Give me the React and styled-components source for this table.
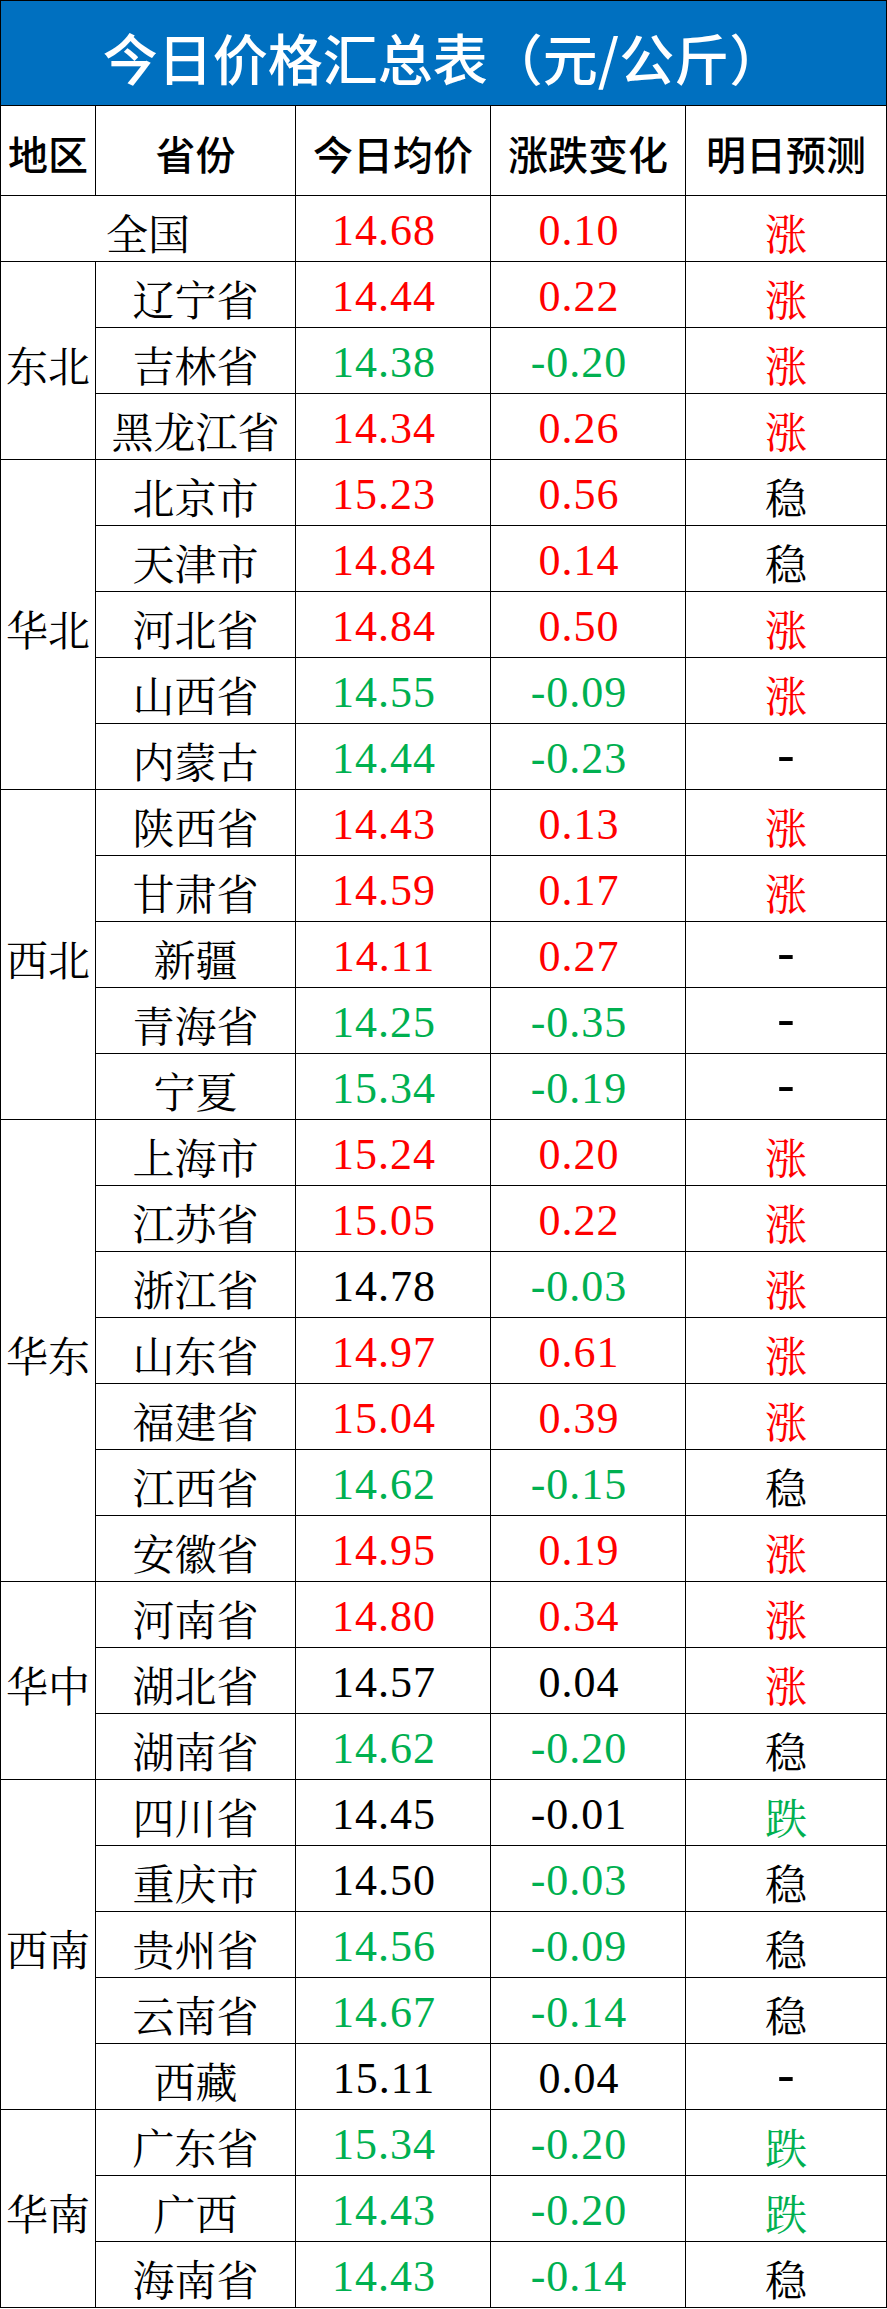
import React from "react"
import styled, { createGlobalStyle } from "styled-components"

const GlobalStyle = createGlobalStyle`
  html, body {
    margin: 0;
    padding: 0;
    background: #fff;
  }
  body {
    font-family: "Noto Serif CJK SC", "Noto Sans CJK SC", sans-serif;
  }
`

const RED = "#ff0000"
const GREEN = "#00b050"
const BLACK = "#000000"

const colorOf = (c) => (c === "r" ? RED : c === "g" ? GREEN : BLACK)

const Sheet = styled.div`
  width: 887px;
  box-sizing: border-box;
  border: 1px solid #000;
  border-bottom: none;
`

const TitleBar = styled.div`
  height: 105px;
  border-bottom: 1px solid #000;
  background: #0070c0;
  color: #fff;
  display: flex;
  align-items: center;
  justify-content: center;
  font-family: "Noto Sans CJK SC", sans-serif;
  font-size: 55px;
  font-weight: 500;
  padding: 6px 0 0 0;
  box-sizing: border-box;
`

const Grid = styled.div`
  display: grid;
  grid-template-columns: 95px 200px 195px 195px 200px;
  grid-template-rows: 90px;
  grid-auto-rows: 66px;
`

const Cell = styled.div`
  box-sizing: border-box;
  display: flex;
  align-items: center;
  justify-content: center;
  border-bottom: 1px solid #000;
  border-right: ${(p) => (p.$last ? "none" : "1px solid #000")};
  grid-column: ${(p) => (p.$cols ? `span ${p.$cols}` : "auto")};
  color: ${(p) => p.$color || BLACK};
  white-space: nowrap;
`

const HeadCell = styled(Cell)`
  font-family: "Noto Sans CJK SC", sans-serif;
  font-size: 40px;
  font-weight: 500;
  padding-top: 4px;
`

const TextCell = styled(Cell)`
  font-family: "Noto Serif CJK SC", "Noto Sans CJK SC", sans-serif;
  font-size: 42px;
  padding-top: 6px;
`

const NumCell = styled(Cell)`
  font-family: "Liberation Serif", "Times New Roman", serif;
  font-size: 44px;
  letter-spacing: 1px;
  padding-right: 18px;
  padding-top: 4px;
`

const DashCell = styled(Cell)`
  font-family: "Liberation Serif", "Times New Roman", serif;
  font-size: 52px;
  padding-bottom: 4px;
`

const regions = [
  {
    name: "东北",
    rows: [
      ["辽宁省", "14.44", "r", "0.22", "r", "涨", "r"],
      ["吉林省", "14.38", "g", "-0.20", "g", "涨", "r"],
      ["黑龙江省", "14.34", "r", "0.26", "r", "涨", "r"],
    ],
  },
  {
    name: "华北",
    rows: [
      ["北京市", "15.23", "r", "0.56", "r", "稳", "k"],
      ["天津市", "14.84", "r", "0.14", "r", "稳", "k"],
      ["河北省", "14.84", "r", "0.50", "r", "涨", "r"],
      ["山西省", "14.55", "g", "-0.09", "g", "涨", "r"],
      ["内蒙古", "14.44", "g", "-0.23", "g", "-", "k"],
    ],
  },
  {
    name: "西北",
    rows: [
      ["陕西省", "14.43", "r", "0.13", "r", "涨", "r"],
      ["甘肃省", "14.59", "r", "0.17", "r", "涨", "r"],
      ["新疆", "14.11", "r", "0.27", "r", "-", "k"],
      ["青海省", "14.25", "g", "-0.35", "g", "-", "k"],
      ["宁夏", "15.34", "g", "-0.19", "g", "-", "k"],
    ],
  },
  {
    name: "华东",
    rows: [
      ["上海市", "15.24", "r", "0.20", "r", "涨", "r"],
      ["江苏省", "15.05", "r", "0.22", "r", "涨", "r"],
      ["浙江省", "14.78", "k", "-0.03", "g", "涨", "r"],
      ["山东省", "14.97", "r", "0.61", "r", "涨", "r"],
      ["福建省", "15.04", "r", "0.39", "r", "涨", "r"],
      ["江西省", "14.62", "g", "-0.15", "g", "稳", "k"],
      ["安徽省", "14.95", "r", "0.19", "r", "涨", "r"],
    ],
  },
  {
    name: "华中",
    rows: [
      ["河南省", "14.80", "r", "0.34", "r", "涨", "r"],
      ["湖北省", "14.57", "k", "0.04", "k", "涨", "r"],
      ["湖南省", "14.62", "g", "-0.20", "g", "稳", "k"],
    ],
  },
  {
    name: "西南",
    rows: [
      ["四川省", "14.45", "k", "-0.01", "k", "跌", "g"],
      ["重庆市", "14.50", "k", "-0.03", "g", "稳", "k"],
      ["贵州省", "14.56", "g", "-0.09", "g", "稳", "k"],
      ["云南省", "14.67", "g", "-0.14", "g", "稳", "k"],
      ["西藏", "15.11", "k", "0.04", "k", "-", "k"],
    ],
  },
  {
    name: "华南",
    rows: [
      ["广东省", "15.34", "g", "-0.20", "g", "跌", "g"],
      ["广西", "14.43", "g", "-0.20", "g", "跌", "g"],
      ["海南省", "14.43", "g", "-0.14", "g", "稳", "k"],
    ],
  },
]

function DataCells({ row }) {
  const [prov, price, pc, diff, dc, fore, fc] = row
  const Forecast = fore === "-" ? DashCell : TextCell
  return (
    <>
      <TextCell>{prov}</TextCell>
      <NumCell $color={colorOf(pc)}>{price}</NumCell>
      <NumCell $color={colorOf(dc)}>{diff}</NumCell>
      <Forecast $last $color={colorOf(fc)}>
        {fore}
      </Forecast>
    </>
  )
}

export default function App() {
  return (
    <>
      <GlobalStyle />
      <Sheet>
        <TitleBar>今日价格汇总表（元/公斤）</TitleBar>
        <Grid>
          <HeadCell>地区</HeadCell>
          <HeadCell>省份</HeadCell>
          <HeadCell>今日均价</HeadCell>
          <HeadCell>涨跌变化</HeadCell>
          <HeadCell $last>明日预测</HeadCell>

          <TextCell $cols={2}>全国</TextCell>
          <NumCell $color={RED}>14.68</NumCell>
          <NumCell $color={RED}>0.10</NumCell>
          <TextCell $last $color={RED}>
            涨
          </TextCell>

          {regions.map((reg) => (
            <React.Fragment key={reg.name}>
              <TextCell style={{ gridRow: `span ${reg.rows.length}` }}>
                {reg.name}
              </TextCell>
              {reg.rows.map((row) => (
                <DataCells key={row[0]} row={row} />
              ))}
            </React.Fragment>
          ))}
        </Grid>
      </Sheet>
    </>
  )
}
